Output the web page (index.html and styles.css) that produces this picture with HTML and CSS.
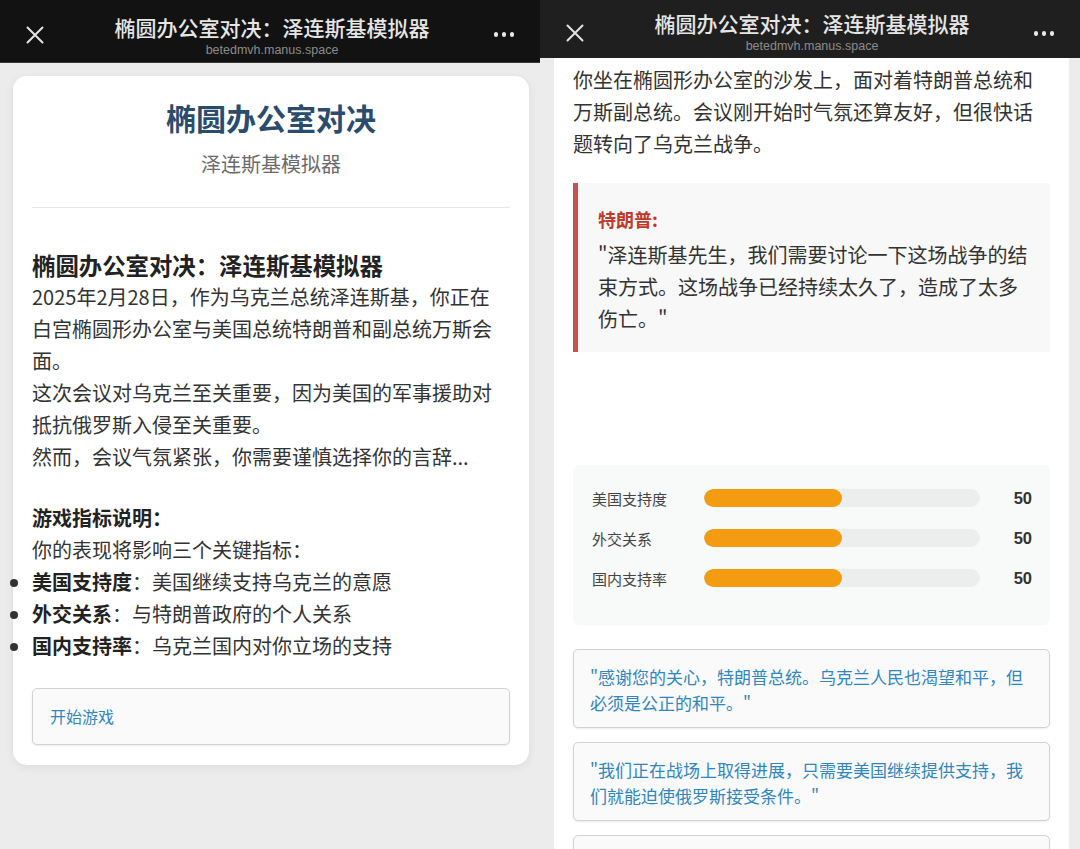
FILE: index.html
```html
<!DOCTYPE html>
<html lang="zh-CN">
<head>
<meta charset="utf-8">
<title>椭圆办公室对决：泽连斯基模拟器</title>
<link rel="stylesheet" href="styles.css">
</head>
<body>
<div class="screens">

  <!-- Start screen -->
  <section class="phone">
    <header class="topbar topbar--black">
      <svg class="close" viewBox="0 0 18 18" aria-hidden="true"><path d="M1.5 1.5 L16.5 16.5 M16.5 1.5 L1.5 16.5"/></svg>
      <div class="topbar-title">
        <div class="topbar-name">椭圆办公室对决：泽连斯基模拟器</div>
        <div class="topbar-url">betedmvh.manus.space</div>
      </div>
      <span class="more"><i></i><i></i><i></i></span>
    </header>
    <main class="viewport">
      <article class="card card--intro">
        <div class="card-head">
          <h1 class="game-title">椭圆办公室对决</h1>
          <p class="game-sub">泽连斯基模拟器</p>
        </div>
        <h3 class="intro-title">椭圆办公室对决：泽连斯基模拟器</h3>
        <p class="story">2025年2月28日，作为乌克兰总统泽连斯基，你正在白宫椭圆形办公室与美国总统特朗普和副总统万斯会面。<br>这次会议对乌克兰至关重要，因为美国的军事援助对抵抗俄罗斯入侵至关重要。<br>然而，会议气氛紧张，你需要谨慎选择你的言辞...</p>
        <p class="rules-title">游戏指标说明：</p>
        <p class="rules-lead">你的表现将影响三个关键指标：</p>
        <ul class="rules">
          <li><strong>美国支持度</strong>：美国继续支持乌克兰的意愿</li>
          <li><strong>外交关系</strong>：与特朗普政府的个人关系</li>
          <li><strong>国内支持率</strong>：乌克兰国内对你立场的支持</li>
        </ul>
        <button class="choice choice--start" type="button">开始游戏</button>
      </article>
    </main>
  </section>

  <!-- Game screen -->
  <section class="phone">
    <header class="topbar topbar--grey">
      <svg class="close" viewBox="0 0 18 18" aria-hidden="true"><path d="M1.5 1.5 L16.5 16.5 M16.5 1.5 L1.5 16.5"/></svg>
      <div class="topbar-title">
        <div class="topbar-name">椭圆办公室对决：泽连斯基模拟器</div>
        <div class="topbar-url">betedmvh.manus.space</div>
      </div>
      <span class="more"><i></i><i></i><i></i></span>
    </header>
    <main class="viewport">
      <article class="card card--game">
        <p class="scene">你坐在椭圆形办公室的沙发上，面对着特朗普总统和万斯副总统。会议刚开始时气氛还算友好，但很快话题转向了乌克兰战争。</p>

        <blockquote class="dialogue">
          <div class="speaker">特朗普:</div>
          <p class="line">"泽连斯基先生，我们需要讨论一下这场战争的结束方式。这场战争已经持续太久了，造成了太多伤亡。"</p>
        </blockquote>

        <div class="stats">
          <div class="stat">
            <span class="stat-label">美国支持度</span>
            <span class="stat-track"><span class="stat-fill" style="width:50%"></span></span>
            <span class="stat-value">50</span>
          </div>
          <div class="stat">
            <span class="stat-label">外交关系</span>
            <span class="stat-track"><span class="stat-fill" style="width:50%"></span></span>
            <span class="stat-value">50</span>
          </div>
          <div class="stat">
            <span class="stat-label">国内支持率</span>
            <span class="stat-track"><span class="stat-fill" style="width:50%"></span></span>
            <span class="stat-value">50</span>
          </div>
        </div>

        <div class="choices">
          <button class="choice" type="button">"感谢您的关心，特朗普总统。乌克兰人民也渴望和平，但必须是公正的和平。"</button>
          <button class="choice" type="button">"我们正在战场上取得进展，只需要美国继续提供支持，我们就能迫使俄罗斯接受条件。"</button>
          <button class="choice" type="button">"我们愿意谈判，但任何协议都必须有可靠的安全保障。"</button>
        </div>
      </article>
    </main>
  </section>

</div>
</body>
</html>
```

FILE: styles.css
```css
* {
  box-sizing: border-box;
}

html, body {
  margin: 0;
  padding: 0;
}

body {
  width: 1080px;
  height: 849px;
  overflow: hidden;
  background: #ececec;
  font-family: "Noto Sans CJK SC", "Noto Sans", sans-serif;
  color: #333;
}

.screens {
  display: flex;
  width: 1080px;
  height: 849px;
}

.phone {
  width: 540px;
  height: 849px;
  overflow: hidden;
  display: flex;
  flex-direction: column;
  background: #ececec;
}

/* ---------- in-app browser bar ---------- */
.topbar {
  flex: none;
  display: grid;
  grid-template-columns: 70px 1fr 66px;
  align-items: start;
  color: #e8e8e8;
}

.topbar--black {
  height: 63px;
  background: #121212;
  border-bottom: 1px solid #3a3a3a;
  padding-top: 16px;
}

.topbar--grey {
  height: 58px;
  background: #1f1f1f;
  padding-top: 12px;
}

.close {
  justify-self: center;
  width: 18px;
  height: 18px;
  margin-top: 10px;
  fill: none;
  stroke: #e4e4e4;
  stroke-width: 2;
  stroke-linecap: round;
}

.topbar--grey .close {
  margin-top: 12px;
}

.topbar-title {
  text-align: center;
}

.topbar-name {
  font-size: 21px;
  line-height: 22px;
  font-weight: 500;
  color: #e6e6e6;
}

.topbar-url {
  font-family: "Liberation Sans", "Noto Sans", sans-serif;
  font-size: 12.5px;
  line-height: 12px;
  color: #8c8c8c;
  margin-top: 6px;
}

.more {
  justify-self: center;
  display: flex;
  gap: 3.5px;
  margin-top: 16px;
  margin-right: 6px;
}

.topbar--grey .more {
  margin-top: 19px;
}

.more i {
  display: block;
  width: 4.5px;
  height: 4.5px;
  border-radius: 50%;
  background: #e8e8e8;
}

/* ---------- page ---------- */
.viewport {
  flex: 1;
  min-height: 0;
}

.card {
  background: #fff;
}

.card--intro {
  margin: 13px 11px 0 13px;
  padding: 21px 19px 20px;
  border-radius: 14px;
  box-shadow: 0 2px 10px rgba(0, 0, 0, 0.07);
}

.card--game {
  height: 100%;
  margin: 0 11px 0 14px;
  padding: 6px 19px 0;
}

.card-head {
  text-align: center;
  padding-bottom: 29px;
  border-bottom: 1px solid #e6e6e6;
}

.game-title {
  margin: 0;
  font-size: 30px;
  line-height: 40px;
  font-weight: 700;
  color: #2b4c6d;
}

.game-sub {
  margin: 13px 0 0;
  font-size: 20px;
  line-height: 28px;
  color: #6b6b6b;
}

.intro-title {
  margin: 41px 0 0;
  font-size: 23.4px;
  line-height: 32px;
  font-weight: 700;
  color: #222;
}

.story,
.rules-lead,
.rules,
.scene {
  font-size: 20px;
  line-height: 32px;
  color: #333;
}

.story {
  margin: 0;
  max-width: 464px;
}

.rules-title {
  margin: 29px 0 0;
  font-size: 20px;
  line-height: 32px;
  font-weight: 700;
  color: #222;
}

.rules-lead {
  margin: 0;
}

.rules {
  margin: 0;
  padding: 0;
  list-style: disc outside;
}

.rules strong {
  color: #222;
}

/* ---------- buttons ---------- */
.choice {
  display: block;
  width: 100%;
  text-align: left;
  font-family: inherit;
  background: #fafafa;
  border: 1px solid #d2d2d2;
  border-radius: 5px;
  box-shadow: 0 1px 2px rgba(0, 0, 0, 0.08);
  color: #2f86c1;
  cursor: pointer;
}

.choice--start {
  margin-top: 26px;
  padding: 16px 17px;
  font-size: 16px;
  line-height: 23px;
}

/* ---------- game screen ---------- */
.scene {
  margin: 0;
}

.dialogue {
  margin: 23px 0 0;
  padding: 20px 20px 17px;
  background: #f8f8f8;
  border-left: 5px solid #c9504b;
}

.speaker {
  font-size: 18px;
  line-height: 32px;
  font-weight: 700;
  color: #c0392b;
}

.line {
  margin: 4px 0 0;
  font-size: 20px;
  line-height: 32px;
  color: #333;
}

.stats {
  margin-top: 113px;
  padding: 21px 18px 35px 19px;
  background: #f8f9f9;
  border-radius: 6px;
  display: flex;
  flex-direction: column;
  gap: 16px;
}

.stat {
  display: flex;
  align-items: center;
  height: 24px;
}

.stat-label {
  flex: none;
  width: 112px;
  font-size: 15px;
  color: #444;
}

.stat-track {
  flex: 1;
  height: 18px;
  border-radius: 9px;
  background: #eceeee;
  overflow: hidden;
}

.stat-fill {
  display: block;
  height: 100%;
  border-radius: 9px;
  background: #f39c12;
}

.stat-value {
  flex: none;
  width: 52px;
  text-align: right;
  font-family: "Liberation Sans", "Noto Sans", sans-serif;
  font-size: 16.5px;
  font-weight: 700;
  color: #333;
}

.choices {
  margin-top: 24px;
  display: flex;
  flex-direction: column;
  gap: 14px;
}

.choices .choice {
  padding: 14px 16px 11px;
  font-size: 17px;
  line-height: 26px;
}
```
